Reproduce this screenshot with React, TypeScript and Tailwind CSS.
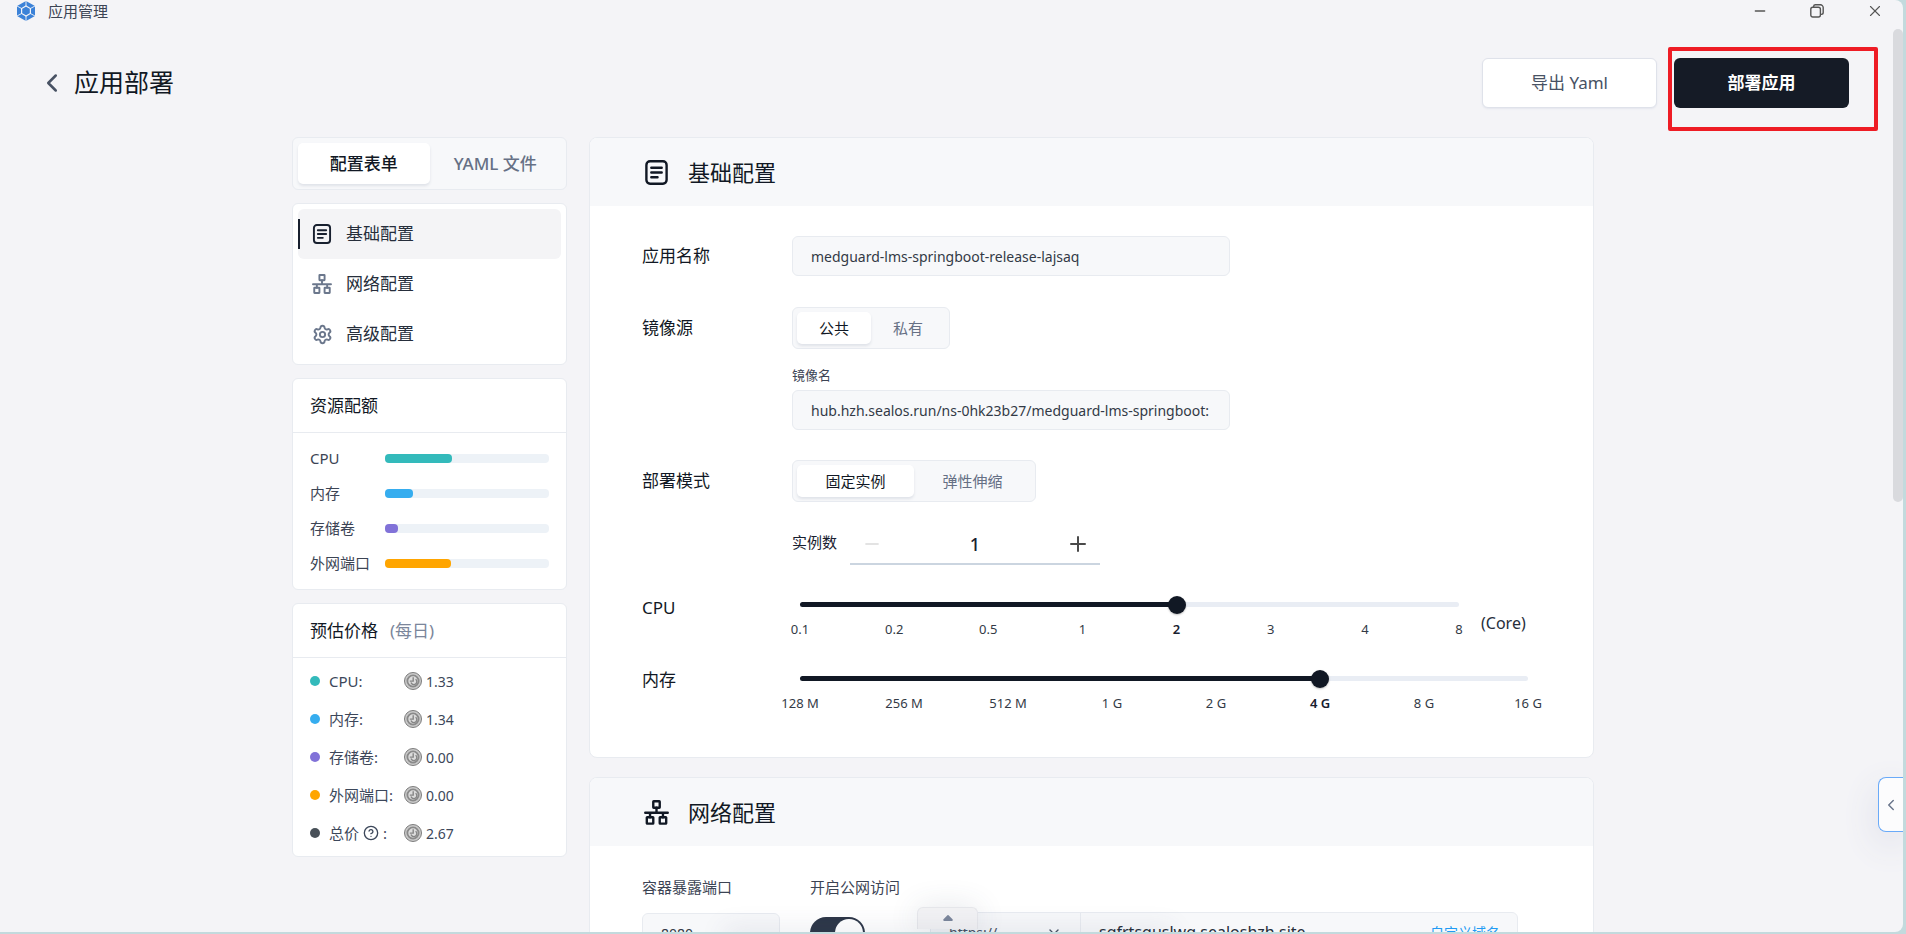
import { useState } from 'react'
import type { ReactNode } from 'react'
import { ChevronDown, ChevronLeft, CircleHelp, Minus, Plus, Settings, X } from 'lucide-react'
import clsx from 'clsx'

const quotas = [
  { name: 'CPU', percent: 41, color: 'bg-[#33babb]' },
  { name: '内存', percent: 17, color: 'bg-[#36adef]' },
  { name: '存储卷', percent: 8, color: 'bg-[#8172d8]' },
  { name: '外网端口', percent: 40, color: 'bg-[#ffa500]' },
]

const prices = [
  { name: 'CPU', value: '1.33', color: 'bg-[#33babb]' },
  { name: '内存', value: '1.34', color: 'bg-[#36adef]' },
  { name: '存储卷', value: '0.00', color: 'bg-[#8172d8]' },
  { name: '外网端口', value: '0.00', color: 'bg-[#ffa500]' },
  { name: '总价', value: '2.67', color: 'bg-[#485058]', help: true },
]

const cpuMarks = ['0.1', '0.2', '0.5', '1', '2', '3', '4', '8']
const memoryMarks = ['128 M', '256 M', '512 M', '1 G', '2 G', '4 G', '8 G', '16 G']

function LogoIcon() {
  return (
    <svg viewBox="0 0 20 20" className="size-5" aria-hidden="true">
      <path d="M10 0 19 5v10l-9 5-9-5V5z" fill="#3b82d8" />
      <path d="M10 5 14.4 7.5v5L10 15l-4.4-2.5v-5z" fill="#3b82d8" stroke="#f4f4f7" strokeWidth="1.2" />
      <path
        d="M10 0v5M10 15v5M19 5l-4.6 2.5M19 15l-4.6-2.5M1 5l4.6 2.5M1 15l4.6-2.5"
        stroke="#f4f4f7"
        strokeWidth="0.9"
      />
    </svg>
  )
}

function FormIcon({ className }: { className?: string }) {
  return (
    <svg viewBox="0 0 24 24" fill="none" stroke="currentColor" strokeWidth="2.3" strokeLinecap="round" className={className} aria-hidden="true">
      <rect x="2.3" y="1.2" width="19.4" height="21.6" rx="3.5" />
      <path d="M7 7.4h10M7 12h10M7 16.6h6" />
    </svg>
  )
}

function NetworkIcon({ className }: { className?: string }) {
  return (
    <svg viewBox="0 0 24 24" fill="none" stroke="currentColor" strokeWidth="2.3" strokeLinecap="round" strokeLinejoin="round" className={className} aria-hidden="true">
      <rect x="8.9" y="1.2" width="6.2" height="6.2" rx="0.4" />
      <rect x="2.7" y="16.5" width="6.2" height="6.2" rx="0.4" />
      <rect x="15.1" y="16.5" width="6.2" height="6.2" rx="0.4" />
      <path d="M12 7.4v4.8M1.2 12.2h21.6M5.8 12.2v4.3M18.2 12.2v4.3" />
    </svg>
  )
}

function CoinIcon() {
  return (
    <svg viewBox="0 0 18 18" className="size-[18px] shrink-0" aria-hidden="true">
      <circle cx="9" cy="9" r="8.5" fill="#c9c9c9" stroke="#7d7d7d" />
      <circle cx="9" cy="9" r="5.6" fill="#dcdcdc" stroke="#8a8a8a" strokeWidth="1.8" />
      <path d="M9.2 5.2v3.9H5.8M11.6 7.2a3 3 0 1 1-4.6 3.4" fill="none" stroke="#858585" strokeWidth="1.4" />
    </svg>
  )
}

type SwitchTabsProps = {
  items: string[]
  label: string
  itemClass: string
  className?: string
}

function SwitchTabs({ items, label, itemClass, className }: SwitchTabsProps) {
  const [active, setActive] = useState(0)
  return (
    <div role="tablist" aria-label={label} className={clsx('flex rounded-md border border-[#e8ebf0] bg-[#f7f8fa]', className)}>
      {items.map((item, i) => (
        <button
          key={item}
          role="tab"
          aria-selected={i === active}
          onClick={() => setActive(i)}
          className={clsx(
            'rounded-[5px] whitespace-nowrap',
            itemClass,
            i === active ? 'bg-white text-[#111824] shadow-[0_2px_3px_#dfe2e8]' : 'text-[#667085]',
          )}
        >
          {item}
        </button>
      ))}
    </div>
  )
}

function MarkSlider({ id, marks, initial }: { id: string; marks: string[]; initial: number }) {
  const [value, setValue] = useState(initial)
  const percent = (value / (marks.length - 1)) * 100
  return (
    <div className="ml-2 flex-1">
      <div className="relative flex h-[19px] items-center">
        <div className="h-[5px] w-full rounded-full bg-[#e9edf4]">
          <div className="h-full rounded-full bg-[#111824]" style={{ width: `${percent}%` }} />
        </div>
        <span
          className="absolute size-[18px] -translate-x-1/2 rounded-full bg-[#111824] shadow-[0_1px_2px_rgba(0,0,0,0.25)]"
          style={{ left: `${percent}%` }}
        />
        <input
          id={id}
          type="range"
          min={0}
          max={marks.length - 1}
          value={value}
          onChange={(e) => setValue(Number(e.target.value))}
          className="absolute inset-0 w-full cursor-pointer opacity-0"
        />
      </div>
      <div className="mt-1.5 flex h-[18px] justify-between text-[13px] leading-[18px] text-[#333a46]">
        {marks.map((mark, i) => (
          <span key={mark} className={clsx('flex w-0 justify-center whitespace-nowrap', i === value && 'font-semibold text-[#18202f]')}>
            {mark}
          </span>
        ))}
      </div>
    </div>
  )
}

function Section({ icon, title, children }: { icon: ReactNode; title: string; children: ReactNode }) {
  return (
    <section className="overflow-hidden rounded-lg border border-[#e8ebf0] bg-white">
      <h2 className="flex h-[68px] items-center gap-[19px] bg-[#f7f8fa] pl-[54px] text-[22px] leading-8 text-[#111824]">
        {icon}
        {title}
      </h2>
      {children}
    </section>
  )
}

function SideCard({ title, note, children }: { title: string; note?: string; children: ReactNode }) {
  return (
    <section className="rounded-md border border-[#e8ebf0] bg-white">
      <h3 className="flex h-[54px] items-center gap-3 border-b border-[#e8ebf0] px-[17px] text-[17px] text-[#111824]">
        {title}
        {note && <span className="text-[#7b869b]">{note}</span>}
      </h3>
      {children}
    </section>
  )
}

function Sidebar() {
  const nav = [
    { name: '基础配置', icon: <FormIcon className="size-5" /> },
    { name: '网络配置', icon: <NetworkIcon className="size-5" /> },
    { name: '高级配置', icon: <Settings className="size-[21px] -mr-px" strokeWidth={2.2} /> },
  ]
  return (
    <aside className="flex w-[275px] shrink-0 flex-col gap-[13px]">
      <SwitchTabs label="编辑方式" items={['配置表单', 'YAML 文件']} className="h-[53px] p-[5px]" itemClass="flex-1 text-[17px] font-medium" />
      <nav className="rounded-md border border-[#e8ebf0] bg-white p-[5px]">
        {nav.map((item, i) => (
          <a
            key={item.name}
            href="#"
            className={clsx(
              'flex h-[50px] items-center rounded-md text-[17px]',
              i === 0 ? 'bg-[#f4f4f6] text-[#18202f]' : 'text-[#6b778c]',
            )}
          >
            <span className={clsx('mr-3 h-[30px] w-0.5', i === 0 && 'bg-[#18202f]')} />
            {item.icon}
            <span className="ml-3.5 text-[#262e3b]">{item.name}</span>
          </a>
        ))}
      </nav>
      <SideCard title="资源配额">
        <ul className="px-[17px] py-2">
          {quotas.map((quota) => (
            <li key={quota.name} className="flex h-[35px] items-center text-[15px] text-[#3c4454]">
              <span className="w-[75px]">{quota.name}</span>
              <span className="h-[9px] flex-1 rounded-sm bg-[#edf2f7]">
                <span className={clsx('block h-full rounded-sm', quota.color)} style={{ width: `${quota.percent}%` }} />
              </span>
            </li>
          ))}
        </ul>
      </SideCard>
      <SideCard title="预估价格" note="(每日)">
        <ul className="px-[17px] py-1">
          {prices.map((price) => (
            <li key={price.name} className="flex h-[38px] items-center text-[15px] text-[#3c475a]">
              <span className={clsx('mr-[9px] size-2.5 rounded-full', price.color)} />
              <span className="flex w-[75px] items-center whitespace-nowrap">
                {price.name}
                {price.help && <CircleHelp className="mx-1 size-4" />}:
              </span>
              <CoinIcon />
              <span className="ml-1 text-[14px]">{price.value}</span>
            </li>
          ))}
        </ul>
      </SideCard>
    </aside>
  )
}

const rowLabel = 'flex w-[150px] shrink-0 items-center text-[17px] text-[#111824]'
const field = 'h-10 w-[438px] rounded-md border border-[#e8ebf0] bg-[#f7f8fa] px-[18px] text-[14px] text-[#333a46]'

function BasicForm() {
  const [count, setCount] = useState(1)
  return (
    <div className="pt-[30px] pr-[65px] pb-[45px] pl-[52px]">
      <div className="flex">
        <label htmlFor="appName" className={clsx(rowLabel, 'h-10')}>应用名称</label>
        <input id="appName" className={field} defaultValue="medguard-lms-springboot-release-lajsaq" />
      </div>
      <div className="mt-[31px] flex">
        <span className={clsx(rowLabel, 'h-[42px]')}>镜像源</span>
        <div className="flex flex-col items-start">
          <SwitchTabs label="镜像源" items={['公共', '私有']} className="h-[42px] p-1" itemClass="w-[74px] text-[15px]" />
          <label htmlFor="imageName" className="mt-[17px] mb-1.5 text-[13px] leading-[18px] text-[#3c4454]">镜像名</label>
          <input id="imageName" className={field} defaultValue="hub.hzh.sealos.run/ns-0hk23b27/medguard-lms-springboot:" />
        </div>
      </div>
      <div className="mt-[30px] flex">
        <span className={clsx(rowLabel, 'h-[42px]')}>部署模式</span>
        <div className="flex flex-col items-start">
          <SwitchTabs label="部署模式" items={['固定实例', '弹性伸缩']} className="h-[42px] p-1" itemClass="w-[117px] text-[15px]" />
          <div className="mt-[23px] flex items-start">
            <label htmlFor="replicas" className="w-[58px] text-[15px] leading-[34px] text-[#18202f]">实例数</label>
            <div className="flex h-10 w-[250px] items-center border-b-2 border-[#cbd5e0] text-[#4a4a4a]">
              <button aria-label="减少" disabled={count <= 1} onClick={() => setCount(count - 1)} className="px-3 disabled:text-[#e3e3e3]">
                <Minus className="size-5" strokeWidth={2.6} />
              </button>
              <input
                id="replicas"
                value={count}
                onChange={(e) => setCount(Number(e.target.value) || 1)}
                className="min-w-0 flex-1 text-center text-[18px] font-medium text-[#18202f]"
              />
              <button aria-label="增加" onClick={() => setCount(count + 1)} className="px-2.5">
                <Plus className="size-6" />
              </button>
            </div>
          </div>
        </div>
      </div>
      <div className="mt-[30px] flex">
        <label htmlFor="cpu" className={clsx(rowLabel, 'h-[26px]')}>CPU</label>
        <MarkSlider id="cpu" marks={cpuMarks} initial={4} />
        <span className="ml-[22px] w-[47px] self-end text-[16px] leading-[30px] whitespace-nowrap text-[#262e3b]">(Core)</span>
      </div>
      <div className="mt-[31px] flex">
        <label htmlFor="memory" className={clsx(rowLabel, 'h-[22px]')}>内存</label>
        <MarkSlider id="memory" marks={memoryMarks} initial={5} />
      </div>
    </div>
  )
}

function NetworkForm() {
  return (
    <div className="flex items-start pt-[30px] pr-[75px] pb-12 pl-[52px]">
      <div className="w-[168px]">
        <label htmlFor="port" className="block text-[15px] leading-[22px] text-[#3c4454]">容器暴露端口</label>
        <input
          id="port"
          defaultValue="8080"
          className="mt-[15px] h-10 w-[138px] rounded-md border border-[#e8ebf0] bg-[#f7f8fa] px-[18px] text-[14px] text-[#333a46]"
        />
      </div>
      <div className="w-[120px]">
        <label htmlFor="public" className="block text-[15px] leading-[22px] text-[#3c4454]">开启公网访问</label>
        <label className="mt-[19px] flex h-8 w-[55px] items-center justify-end rounded-full bg-[#2d3748] p-0.5">
          <input id="public" type="checkbox" defaultChecked className="sr-only" />
          <span className="size-7 rounded-full bg-white" />
        </label>
      </div>
      <div className="mt-9 flex h-10 flex-1 items-center rounded-md border border-[#e8ebf0] bg-[#f7f8fa]">
        <button className="flex h-full w-[150px] items-center justify-between border-r border-[#e8ebf0] pr-[18px] pl-[18px] text-[14px] text-[#485264]">
          https://
          <ChevronDown className="size-4" />
        </button>
        <span className="flex-1 pl-[18px] text-[16px] text-[#262e3b]">sqfrtsquslwq.sealoshzh.site</span>
        <a href="#" className="mr-[17px] text-[14px] text-[#219bf4]">自定义域名</a>
      </div>
    </div>
  )
}

function TitleBar() {
  return (
    <header className="flex h-[22px] items-center justify-between pr-[19px] pl-4 text-[15px] text-[#3c4454]">
      <div className="flex items-center gap-3">
        <LogoIcon />
        应用管理
      </div>
      <div className="flex items-center gap-[42px] text-[#555]">
        <button aria-label="最小化">
          <Minus className="size-4" />
        </button>
        <button aria-label="还原">
          <svg viewBox="0 0 14 14" fill="none" stroke="currentColor" strokeWidth="1.4" className="size-3.5" aria-hidden="true">
            <rect x="0.8" y="3.2" width="9.6" height="9.8" rx="2" />
            <path d="M3.6 3V2.4A1.8 1.8 0 0 1 5.4.8h5A2.8 2.8 0 0 1 13.2 3.6v5a1.8 1.8 0 0 1-1.8 1.8h-.8" />
          </svg>
        </button>
        <button aria-label="关闭">
          <X className="size-[18px]" strokeWidth={1.5} />
        </button>
      </div>
    </header>
  )
}

export default function App() {
  return (
    <div className="h-screen bg-[#c3dadd] pr-[3px] pb-0.5 font-['Noto_Sans','Noto_Sans_CJK_SC',sans-serif]">
      <div className="relative flex h-full flex-col overflow-hidden rounded-r-lg bg-[#f4f4f7]">
        <TitleBar />
        <main className="min-h-0 flex-1 overflow-hidden pt-9 pr-[17px]">
          <div className="flex items-center px-[37px]">
            <a href="#" aria-label="返回" className="text-[#485264]">
              <ChevronLeft className="size-[30px]" />
            </a>
            <h1 className="ml-[7px] flex-1 text-[25px] text-[#111824]">应用部署</h1>
            <button className="h-[50px] w-[175px] rounded-md border border-[#dfe2ea] bg-white text-[17px] text-[#485264] shadow-[0_1px_2px_#e4e6ee]">
              导出 Yaml
            </button>
            <div className="relative ml-[17px]">
              <button className="h-[50px] w-[175px] rounded-md bg-[#151b26] text-[17px] font-bold text-white">部署应用</button>
              <span className="pointer-events-none absolute -top-[11px] -right-[29px] -bottom-[23px] -left-[6px] rounded-xs border-4 border-[#ee1c25]" />
            </div>
          </div>
          <div className="mx-auto mt-[29px] flex w-full max-w-[1302px] items-start gap-[22px]">
            <Sidebar />
            <div className="flex min-w-0 flex-1 flex-col gap-[19px]">
              <Section icon={<FormIcon className="size-[25px]" />} title="基础配置">
                <BasicForm />
              </Section>
              <Section icon={<NetworkIcon className="size-[25px]" />} title="网络配置">
                <NetworkForm />
              </Section>
            </div>
          </div>
        </main>

        <div className="absolute top-[29px] right-0 h-[473px] w-2.5 rounded-full bg-[#d9dade]" />
        <button
          aria-label="展开侧栏"
          className="absolute right-0 bottom-[100px] flex h-[55px] w-[25px] items-center justify-center rounded-l-lg border border-r-0 border-[#6aaaf8] bg-[#fcfcfd] text-[#6b778c] shadow-[0_12px_36px_#dcdde8]"
        >
          <ChevronLeft className="size-[18px]" />
        </button>
        <div className="pointer-events-none absolute right-2 bottom-0 left-0 flex flex-col items-center">
          <button
            aria-label="展开程序坞"
            className="pointer-events-auto mb-[3px] flex h-[22px] w-[61px] justify-center rounded-t-md border border-b-0 border-[#e6e7eb] bg-[#f2f2f4] pt-[7px] shadow-[0_0_30px_rgba(60,70,100,0.14)]"
          >
            <svg viewBox="0 0 10 6" className="h-1.5 w-2.5" aria-hidden="true">
              <path d="M4.2.4a1.1 1.1 0 0 1 1.6 0L9.5 4.2c.7.8.3 1.8-.7 1.8H1.2C.2 6-.2 5 .5 4.2z" fill="#7b869b" />
            </svg>
          </button>
          <div className="h-0 w-[440px] shadow-[0_4px_26px_4px_rgba(60,70,110,0.22)]" />
        </div>
      </div>
    </div>
  )
}
